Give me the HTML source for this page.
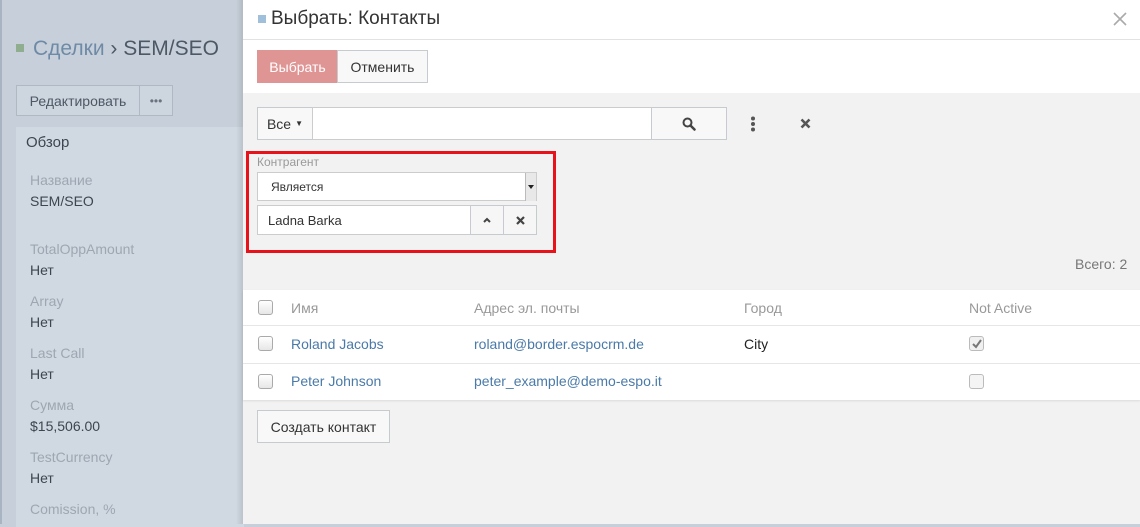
<!DOCTYPE html>
<html><head><meta charset="utf-8"><style>
*{box-sizing:border-box;margin:0;padding:0}
body{width:1140px;height:524px;overflow:hidden;position:relative;font-family:"Liberation Sans","DejaVu Sans",sans-serif;background:#c7d0da;color:#333}
.a{position:absolute;white-space:nowrap}
.lbl{color:#9ea7b1;font-size:14px}
.val{color:#3d4650;font-size:14px}
.btn{position:absolute;border:1px solid #c6cbd0;font-size:14px;display:flex;align-items:center;justify-content:center}
.cb{position:absolute;width:15px;height:15px;border:1px solid #aaa;border-radius:3px;background:linear-gradient(#fff,#e6e6e6)}
</style></head><body>
<div class="a" style="left:0;top:0;width:2px;height:524px;background:#a8b4c2"></div>
<div class="a" style="left:16px;top:44px;width:8px;height:8px;background:#8fae8f"></div>
<div class="a" style="left:33px;top:37px;font-size:21px;color:#6f8aa6">Сделки <span style="color:#4d5866">› SEM/SEO</span></div>
<div class="btn" style="left:16px;top:85px;width:124px;height:31px;color:#4d5866;background:#cdd5de;border-color:#b0b9c3">Редактировать</div>
<div class="btn" style="left:139px;top:85px;width:34px;height:31px;color:#6a7480;background:#cdd5de;border-color:#b0b9c3;font-size:12px">•••</div>
<div class="a" style="left:16px;top:127px;width:228px;height:400px;background:#d0d9e2"></div>
<div class="a val" style="left:26px;top:134px;font-size:15px">Обзор</div>
<div class="a lbl" style="left:30px;top:172px">Название</div><div class="a val" style="left:30px;top:193px">SEM/SEO</div>
<div class="a lbl" style="left:30px;top:241px">TotalOppAmount</div><div class="a val" style="left:30px;top:262px">Нет</div>
<div class="a lbl" style="left:30px;top:293px">Array</div><div class="a val" style="left:30px;top:314px">Нет</div>
<div class="a lbl" style="left:30px;top:345px">Last Call</div><div class="a val" style="left:30px;top:366px">Нет</div>
<div class="a lbl" style="left:30px;top:397px">Сумма</div><div class="a val" style="left:30px;top:418px">$15,506.00</div>
<div class="a lbl" style="left:30px;top:449px">TestCurrency</div><div class="a val" style="left:30px;top:470px">Нет</div>
<div class="a lbl" style="left:30px;top:501px">Comission, %</div>
<div class="a" style="left:236px;top:0;width:8px;height:524px;background:linear-gradient(90deg,rgba(0,0,0,0),rgba(0,0,0,.12))"></div>
<div class="a" style="left:243px;top:0;width:897px;height:524px;background:#f2f2f2"></div>
<div class="a" style="left:243px;top:0;width:897px;height:93px;background:#fff"></div>
<div class="a" style="left:243px;top:39px;width:897px;height:1px;background:#e2e2e2"></div>
<div class="a" style="left:258px;top:15px;width:8px;height:8px;background:#9fbfdb"></div>
<div class="a" style="left:271px;top:8px;font-size:19px;color:#333">Выбрать: Контакты</div>
<svg class="a" style="left:1113px;top:12px" width="14" height="14"><path d="M1 1L13 13M13 1L1 13" stroke="#aaa" stroke-width="1.6"/></svg>
<div class="btn" style="left:257px;top:50px;width:81px;height:33px;background:#e09595;color:#fff;border-color:#e09595">Выбрать</div>
<div class="btn" style="left:337px;top:50px;width:91px;height:33px;background:#f8f8f8;color:#333">Отменить</div>
<div class="btn" style="left:257px;top:107px;width:56px;height:33px;background:#f8f8f8">Все <span style="font-size:8px;margin-left:4px">▼</span></div>
<div class="a" style="left:312px;top:107px;width:340px;height:33px;background:#fff;border:1px solid #ccc"></div>
<div class="btn" style="left:651px;top:107px;width:76px;height:33px;background:#f8f8f8">
<svg width="14" height="14" viewBox="0 0 14 14"><circle cx="5.5" cy="5.5" r="4" fill="none" stroke="#444" stroke-width="2"/><path d="M8.5 8.5L12.5 12.5" stroke="#444" stroke-width="2.5" stroke-linecap="round"/></svg></div>
<svg class="a" style="left:749px;top:116px" width="8" height="16"><circle cx="4" cy="2.5" r="2" fill="#555"/><circle cx="4" cy="8" r="2" fill="#555"/><circle cx="4" cy="13.5" r="2" fill="#555"/></svg>
<svg class="a" style="left:800px;top:118px" width="11" height="11"><path d="M1.5 1.5L9.5 9.5M9.5 1.5L1.5 9.5" stroke="#555" stroke-width="2.6"/></svg>
<div class="a" style="left:246px;top:151px;width:310px;height:102px;border:3px solid #e8131a"></div>
<div class="a" style="left:257px;top:155px;font-size:12px;color:#999">Контрагент</div>
<div class="a" style="left:257px;top:172px;width:280px;height:29px;background:#fff;border:1px solid #ccc;font-size:12px;padding:7px 0 0 13px">Является</div>
<div class="a" style="left:525px;top:173px;width:11px;height:28px;background:#e8e8e8;border-left:1px solid #bbb"><div style="margin:12px 0 0 2px;width:0;height:0;border:3px solid transparent;border-top:4px solid #222"></div></div>
<div class="a" style="left:257px;top:205px;width:214px;height:30px;background:#fff;border:1px solid #ccc;font-size:13px;padding:7px 0 0 10px">Ladna Barka</div>
<div class="btn" style="left:470px;top:205px;width:34px;height:30px;background:#f6f6f6"><svg width="8" height="6"><path d="M1 5L4 2L7 5" fill="none" stroke="#444" stroke-width="2"/></svg></div>
<div class="btn" style="left:503px;top:205px;width:34px;height:30px;background:#f6f6f6"><svg width="9" height="9"><path d="M1 1L8 8M8 1L1 8" stroke="#444" stroke-width="2.2"/></svg></div>
<div class="a" style="left:1075px;top:256px;font-size:14px;color:#777">Всего: 2</div>
<div class="a" style="left:243px;top:290px;width:897px;height:110px;background:#fff;box-shadow:0 1px 2px rgba(0,0,0,.1)"></div>
<div class="a" style="left:243px;top:325px;width:897px;height:1px;background:#e6e6e6"></div>
<div class="a" style="left:243px;top:363px;width:897px;height:1px;background:#e6e6e6"></div>
<div class="cb" style="left:258px;top:300px"></div>
<div class="cb" style="left:258px;top:336px"></div>
<div class="cb" style="left:258px;top:374px"></div>
<div class="a" style="left:291px;top:300px;font-size:14px;color:#999">Имя</div>
<div class="a" style="left:474px;top:300px;font-size:14px;color:#999">Адрес эл. почты</div>
<div class="a" style="left:744px;top:300px;font-size:14px;color:#999">Город</div>
<div class="a" style="left:969px;top:300px;font-size:14px;color:#999">Not Active</div>
<div class="a" style="left:291px;top:336px;font-size:14px;color:#4a7aa8">Roland Jacobs</div>
<div class="a" style="left:474px;top:336px;font-size:14px;color:#4a7aa8">roland@border.espocrm.de</div>
<div class="a" style="left:744px;top:336px;font-size:14px;color:#222">City</div>
<div class="cb" style="left:969px;top:336px;background:#f0f0f0;border-color:#bbb"><svg width="13" height="13" style="display:block"><path d="M3 7l3 3 5-7" fill="none" stroke="#777" stroke-width="2"/></svg></div>
<div class="a" style="left:291px;top:373px;font-size:14px;color:#4a7aa8">Peter Johnson</div>
<div class="a" style="left:474px;top:373px;font-size:14px;color:#4a7aa8">peter_example@demo-espo.it</div>
<div class="cb" style="left:969px;top:374px;background:#f4f4f4;border-color:#bbb"></div>
<div class="btn" style="left:257px;top:410px;width:133px;height:33px;background:#f8f8f8;color:#333">Создать контакт</div>
</body></html>
